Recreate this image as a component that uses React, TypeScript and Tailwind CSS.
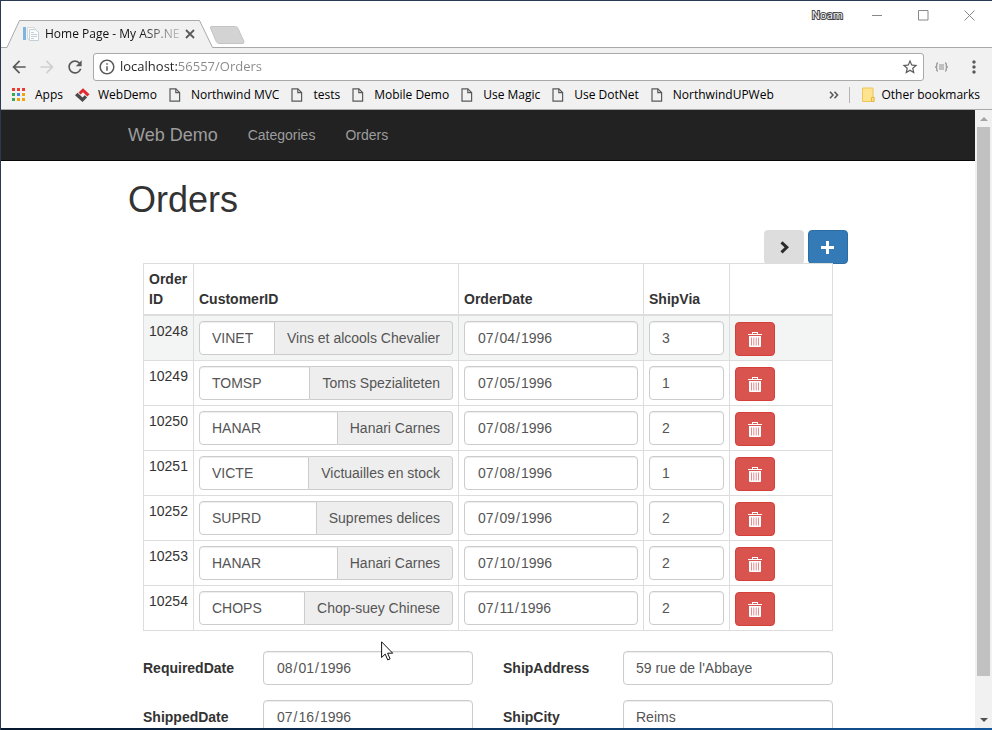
import React from "react";
import {
  MdArrowBack,
  MdArrowForward,
  MdRefresh,
  MdInfoOutline,
  MdStarBorder,
  MdMoreVert,
} from "react-icons/md";

type Order = {
  id: number;
  customer: string;
  company: string;
  date: string;
  via: number;
};

const orders: Order[] = [
  { id: 10248, customer: "VINET", company: "Vins et alcools Chevalier", date: "1996-07-04", via: 3 },
  { id: 10249, customer: "TOMSP", company: "Toms Spezialiteten", date: "1996-07-05", via: 1 },
  { id: 10250, customer: "HANAR", company: "Hanari Carnes", date: "1996-07-08", via: 2 },
  { id: 10251, customer: "VICTE", company: "Victuailles en stock", date: "1996-07-08", via: 1 },
  { id: 10252, customer: "SUPRD", company: "Supremes delices", date: "1996-07-09", via: 2 },
  { id: 10253, customer: "HANAR", company: "Hanari Carnes", date: "1996-07-10", via: 2 },
  { id: 10254, customer: "CHOPS", company: "Chop-suey Chinese", date: "1996-07-11", via: 2 },
];

const bookmarks = [
  "Northwind MVC",
  "tests",
  "Mobile Demo",
  "Use Magic",
  "Use DotNet",
  "NorthwindUPWeb",
];

const inputClass =
  "block h-[34px] w-full min-w-0 rounded border border-[#ccc] bg-white px-3 text-sm text-[#555] shadow-[inset_0_1px_1px_rgba(0,0,0,0.075)] outline-none";
const dateClass = inputClass + " [&::-webkit-calendar-picker-indicator]:hidden";

function PageIcon() {
  return (
    <svg width="12" height="14" viewBox="0 0 12 14" fill="none" stroke="#5a5a5a" strokeWidth="1.2" aria-hidden="true">
      <path d="M1 .8h5.8L10.6 4.600V13.200H1z" />
      <path d="M6.800.8v3.800h3.800" />
    </svg>
  );
}

function WebDemoIcon() {
  return (
    <svg width="15" height="14" viewBox="0 0 15 14" aria-hidden="true">
      <path d="M3.500 4.500L8 .3l6.500 6-2.200 2.200L8 4.300 5.600 6.600z" fill="#e02a2f" />
      <path d="M0 7.300l2.600-2.600 4.900 4.800 2.300-2.300 2.300 2.200L7.500 14z" fill="#4a4a4a" />
    </svg>
  );
}

function AppsIcon() {
  const colors = ["#ea3a33", "#ea3a33", "#ea3a33", "#3aa757", "#3f87e5", "#f0a30a", "#3aa757", "#f0a30a", "#f0a30a"];
  return (
    <svg width="13" height="13" viewBox="0 0 13 13" aria-hidden="true">
      {colors.map((c, i) => (
        <rect key={i} x={(i % 3) * 5} y={Math.floor(i / 3) * 5} width="3" height="3" fill={c} />
      ))}
    </svg>
  );
}

function TrashIcon() {
  return (
    <svg width="14" height="15" viewBox="0 0 14 15" aria-hidden="true">
      <path d="M4 0h6v2h4v1H0V2h4zM5 1v1h4V1z" fill="#fff" fillRule="evenodd" />
      <path d="M1 4h12v10q0 1-1 1H2q-1 0-1-1z" fill="#fff" />
      <path d="M3.500 5.500v8M5.800 5.500v8M8.200 5.500v8M10.500 5.500v8" stroke="#e58a90" />
    </svg>
  );
}

function Browser() {
  return (
    <header className="shrink-0 bg-[#f1f1f1] font-['Open_Sans','Noto_Sans',sans-serif]">
      <div className="flex h-[47px] items-end border-b border-[#a9a9a9] bg-white">
        <div className="relative -mb-px ml-1 flex h-7 w-[208px] items-center pr-[18px] pl-[18px]">
          <svg className="absolute inset-0" width="208" height="28" viewBox="0 0 208 28" aria-hidden="true">
            <path d="M0 27.500H2L14.500.5H194.500L207.500 27.500V28H0z" fill="#f1f1f1" />
            <path d="M0 27.500H2L14.500.5H194.500L207.500 27.500" fill="none" stroke="#a9a9a9" />
          </svg>
          <svg className="relative shrink-0" width="16" height="16" viewBox="0 0 16 16" aria-hidden="true">
            <rect x="0" y="1" width="3" height="13" fill="#7fb4dc" />
            <path d="M4.500 1.500h7l1 2.500v9h-8z" fill="#fdfdfd" stroke="#d2dade" />
            <path d="M6.500 3.500h6l3 3v8h-9z" fill="#fbfcfd" stroke="#c5cfd6" />
            <path d="M8 6.500h3M8 8.500h6M8 10.500h6M8 12.500h3" stroke="#c3d0d9" />
          </svg>
          <span className="relative ml-1.5 shrink-0 bg-[linear-gradient(to_right,#111_95px,#bbb_132px)] bg-clip-text text-xs whitespace-nowrap text-transparent">
            Home Page - My ASP.NE
          </span>
          <button aria-label="Close tab" className="relative ml-auto">
            <svg width="10" height="10" viewBox="0 0 10 10" stroke="#5a5a5a" strokeWidth="1.800" aria-hidden="true">
              <path d="M1 1l8 8M9 1l-8 8" />
            </svg>
          </button>
        </div>
        <button aria-label="New tab" className="mb-[3px] -ml-1">
          <svg width="36" height="18" viewBox="0 0 36 18" aria-hidden="true">
            <path d="M2 .5H26.500Q28 .5 29 2.500L35 15.500Q35.500 17 34 17.500H9.500Q8 17 7.200 15.500L1.500 2Q1 .8 2 .5z" fill="#d3d3d3" stroke="#c4c4c4" />
          </svg>
        </button>
        <div className="mb-4 ml-auto flex h-8 items-center">
          <span className="mr-[29px] text-[11px] leading-4 text-white [paint-order:stroke_fill] [-webkit-text-stroke:2px_#444]">Noam</span>
          <button aria-label="Minimize" className="w-[46px]">
            <svg width="10" height="11" viewBox="0 0 10 11" stroke="#888" aria-hidden="true"><path d="M0 5.500h10" /></svg>
          </button>
          <button aria-label="Maximize" className="w-[46px]">
            <svg width="11" height="11" viewBox="0 0 11 11" fill="none" stroke="#888" aria-hidden="true"><path d="M.5.5h9.500v9.500H.5z" /></svg>
          </button>
          <button aria-label="Close" className="w-7">
            <svg width="11" height="11" viewBox="0 0 11 11" stroke="#888" aria-hidden="true"><path d="M.5.5l10 10M10.500.5l-10 10" /></svg>
          </button>
        </div>
      </div>

      <div className="flex h-9 items-center pt-0.5 pr-2 pl-2 text-[#5a5a5a]">
        <button aria-label="Back"><MdArrowBack size={20} /></button>
        <button aria-label="Forward" className="ml-2 text-[#d0d0d0]"><MdArrowForward size={20} /></button>
        <button aria-label="Reload" className="ml-2"><MdRefresh size={20} /></button>
        <div className="ml-2 flex h-7 flex-1 items-center rounded-[3px] border border-[#a9a9a9] bg-white px-1">
          <MdInfoOutline size={18} className="shrink-0" />
          <input
            aria-label="Address"
            defaultValue="localhost:56557/Orders"
            className="ml-1 min-w-0 flex-1 bg-[linear-gradient(to_right,#222_58px,#888_58px)] bg-clip-text text-[13px] text-transparent outline-none"
          />
          <button aria-label="Bookmark this page"><MdStarBorder size={18} /></button>
        </div>
        <button aria-label="Extension" className="ml-[11px]">
          <svg width="13" height="10" viewBox="0 0 13 10" fill="none" stroke="#8f8f8f" strokeWidth="1.200" aria-hidden="true">
            <path d="M3 .8Q1.800.8 1.800 2v2L.6 5l1.200 1v2Q1.800 9.200 3 9.200M10 .8q1.200 0 1.200 1.200v2L12.400 5l-1.200 1v2q0 1.200-1.200 1.200M4 3h5M4 5h5M4 7h5" />
          </svg>
        </button>
        <button aria-label="Menu" className="ml-4"><MdMoreVert size={20} /></button>
      </div>

      <nav aria-label="Bookmarks" className="flex h-[26px] items-center border-b border-[#a9a9a9] pr-3 pb-1 pl-[11px] text-xs whitespace-nowrap text-black">
        <a href="#apps" className="flex items-center gap-2.5"><AppsIcon />Apps</a>
        <a href="#webdemo" className="ml-3 flex items-center gap-2"><WebDemoIcon />WebDemo</a>
        {bookmarks.map((name) => (
          <a key={name} href="#bookmark" className="ml-3 flex items-center gap-2.5"><PageIcon />{name}</a>
        ))}
        <button aria-label="More bookmarks" className="ml-auto">
          <svg width="10" height="8" viewBox="0 0 10 8" fill="none" stroke="#5a5a5a" strokeWidth="1.600" aria-hidden="true">
            <path d="M1 .8L4 4 1 7.200M5.500.8l3 3.200-3 3.200" />
          </svg>
        </button>
        <span className="ml-2.5 h-4 w-px bg-[#b5b5b5]" />
        <a href="#other" className="ml-3 flex items-center gap-1.5">
          <svg width="13" height="15" viewBox="0 0 13 15" aria-hidden="true">
            <path d="M.5 1h10.500v9h1v4.500H.5z" fill="#ffe38f" stroke="#eec655" />
            <path d="M9.500 10.500h2.500v4h-2.500z" fill="#ffe38f" stroke="#e6b93c" />
          </svg>
          Other bookmarks
        </a>
      </nav>
    </header>
  );
}

function Field({ id, label, value, date = false }: { id: string; label: string; value: string; date?: boolean }) {
  return (
    <div className="grid grid-cols-[120px_1fr] items-center">
      <label htmlFor={id} className="font-bold">{label}</label>
      <input id={id} type={date ? "date" : "text"} defaultValue={value} className={date ? dateClass : inputClass} />
    </div>
  );
}

function OrdersTable() {
  const th = "border-r border-b-2 border-[#ddd] p-[5px] text-left align-bottom";
  const td = "border-r border-b border-[#ddd] p-[5px] align-top";
  return (
    <table className="relative -mt-px w-full table-fixed border-separate border-spacing-0 border-t border-l border-[#ddd]">
      <colgroup>
        <col className="w-[50px]" />
        <col />
        <col className="w-[185px]" />
        <col className="w-[86px]" />
        <col className="w-[103px]" />
      </colgroup>
      <thead>
        <tr>
          <th className={th}>Order ID</th>
          <th className={th}>CustomerID</th>
          <th className={th}>OrderDate</th>
          <th className={th}>ShipVia</th>
          <th className={th} aria-label="Actions" />
        </tr>
      </thead>
      <tbody>
        {orders.map((o, i) => (
          <tr key={o.id} className={i === 0 ? "bg-[#f3f4f4]" : ""}>
            <td className={td}>{o.id}</td>
            <td className={td}>
              <div className="flex">
                <input
                  aria-label="CustomerID"
                  defaultValue={o.customer}
                  className="h-[34px] min-w-0 flex-1 rounded-l border border-[#ccc] bg-white px-3 text-[#555] shadow-[inset_0_1px_1px_rgba(0,0,0,0.075)] outline-none"
                />
                <span className="flex items-center rounded-r border border-l-0 border-[#ccc] bg-[#eee] px-3 whitespace-nowrap text-[#555]">
                  {o.company}
                </span>
              </div>
            </td>
            <td className={td}><input aria-label="OrderDate" type="date" defaultValue={o.date} className={dateClass} /></td>
            <td className={td}><input aria-label="ShipVia" defaultValue={o.via} className={inputClass} /></td>
            <td className="border-r border-b border-[#ddd] px-[5px] pt-1.5 pb-1 align-top">
              <button aria-label="Delete order" className="flex h-[34px] w-10 items-center justify-center rounded border border-[#d43f3a] bg-[#d9534f]">
                <TrashIcon />
              </button>
            </td>
          </tr>
        ))}
      </tbody>
    </table>
  );
}

function ScrollBar() {
  return (
    <div className="flex w-[17px] shrink-0 flex-col bg-[#f1f1f1]">
      <button aria-label="Scroll up" className="flex h-[17px] items-center justify-center">
        <svg width="8" height="4" viewBox="0 0 8 4" fill="#a3a3a3" aria-hidden="true"><path d="M0 4L4 0l4 4z" /></svg>
      </button>
      <div className="flex-1 px-0.5"><div className="h-[94%] bg-[#c1c1c1]" /></div>
      <button aria-label="Scroll down" className="flex h-[17px] items-center justify-center">
        <svg width="8" height="4" viewBox="0 0 8 4" fill="#505050" aria-hidden="true"><path d="M0 0l4 4 4-4z" /></svg>
      </button>
    </div>
  );
}

export default function App() {
  return (
    <div className="relative flex h-screen flex-col overflow-hidden border-t border-l border-[#2b3a52] bg-white">
      <Browser />
      <div className="flex min-h-0 flex-1">
        <div className="min-w-0 flex-1 overflow-hidden font-['Liberation_Sans',Arial,sans-serif] text-sm text-[#333]">
          <nav className="border-b border-[#080808] bg-[#222] text-[#9d9d9d]">
            <div className="mx-auto flex h-[50px] max-w-[750px] items-center gap-[30px] px-[15px]">
              <a href="#home" className="text-lg">Web Demo</a>
              <a href="#categories">Categories</a>
              <a href="#orders">Orders</a>
            </div>
          </nav>
          <main className="mx-auto max-w-[750px] px-[15px] pt-[19px]">
            <h1 className="mb-2.5 text-4xl font-medium">Orders</h1>
            <div className="flex justify-end gap-1">
              <button aria-label="Next" className="flex h-[34px] w-10 items-center justify-center rounded bg-[#ddd]">
                <svg width="12" height="14" viewBox="0 0 12 14" fill="none" stroke="#2b2b2b" strokeWidth="3" aria-hidden="true">
                  <path d="M3.500 2.300L8.800 7.300l-5.300 5" />
                </svg>
              </button>
              <button aria-label="Add order" className="flex h-[34px] w-10 items-center justify-center rounded border border-[#2e6da4] bg-[#337ab7]">
                <svg width="14" height="14" viewBox="0 0 14 14" fill="#fff" aria-hidden="true">
                  <path d="M5 1h3v5h5v3H8v5H5V9H0V6h5z" />
                </svg>
              </button>
            </div>
            <div className="px-[15px]">
              <OrdersTable />
              <form className="mt-5 grid grid-cols-2 gap-x-[30px] gap-y-[15px]">
                <Field id="required" label="RequiredDate" value="1996-08-01" date />
                <Field id="address" label="ShipAddress" value="59 rue de l'Abbaye" />
                <Field id="shipped" label="ShippedDate" value="1996-07-16" date />
                <Field id="city" label="ShipCity" value="Reims" />
              </form>
            </div>
          </main>
        </div>
        <ScrollBar />
      </div>
      <div className="h-0.5 shrink-0 bg-linear-to-r from-[#06182e] to-[#12569b]" />
      <svg className="pointer-events-none absolute top-[640px] left-[380px]" width="13" height="20" viewBox="0 0 13 20" aria-hidden="true">
        <path d="M.6.8v15.700l3.600-3.400 2.500 5.800 2.400-1-2.500-5.700h5.100z" fill="#fff" stroke="#111" />
      </svg>
    </div>
  );
}
